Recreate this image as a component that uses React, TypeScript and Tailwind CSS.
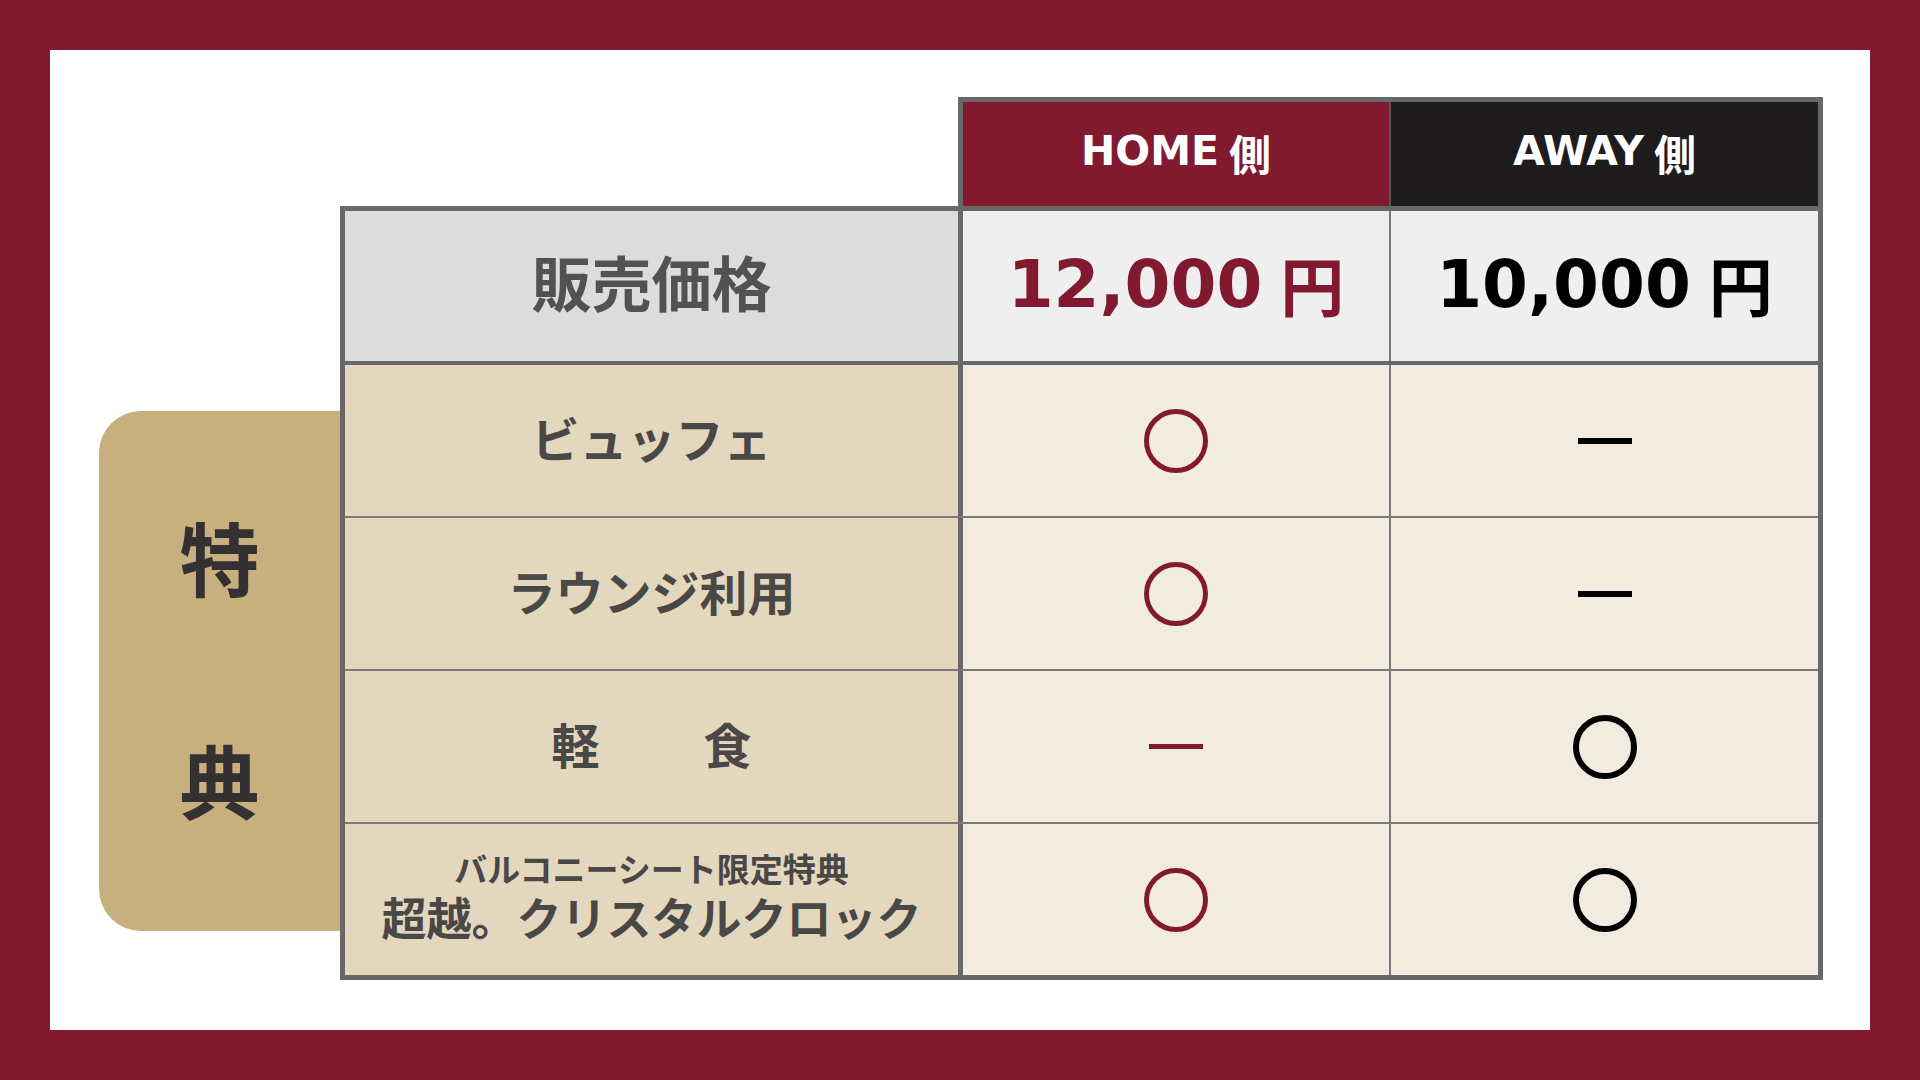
const jp = '[font-family:"Noto_Sans_CJK_JP",sans-serif]';
const latin = '[font-family:"DejaVu_Sans","Noto_Sans_CJK_JP",sans-serif]';

type Mark = 'circle' | 'dash';

function Circle({ tone }: { tone: 'red' | 'black' }) {
  return tone === 'red' ? (
    <div className="w-[64px] h-[64px] rounded-full border-[5px] border-[#821a2f]"></div>
  ) : (
    <div className="w-[64px] h-[64px] rounded-full border-[6px] border-black"></div>
  );
}

function Dash({ tone }: { tone: 'red' | 'black' }) {
  return tone === 'red' ? (
    <div className="w-[54px] h-[5px] bg-[#821a2f]"></div>
  ) : (
    <div className="w-[54px] h-[6px] bg-black"></div>
  );
}

function MarkCell({ mark, tone }: { mark: Mark; tone: 'red' | 'black' }) {
  return mark === 'circle' ? <Circle tone={tone} /> : <Dash tone={tone} />;
}

export default function App() {
  const benefits: { id: number; home: Mark; away: Mark }[] = [
    { id: 1, home: 'circle', away: 'dash' },
    { id: 2, home: 'circle', away: 'dash' },
    { id: 3, home: 'dash', away: 'circle' },
    { id: 4, home: 'circle', away: 'circle' },
  ];

  const label = (id: number) => {
    if (id === 1) return <span className="text-[48px] leading-none">ビュッフェ</span>;
    if (id === 2) return <span className="text-[48px] leading-none">ラウンジ利用</span>;
    if (id === 3)
      return (
        <span className="flex gap-[104px] text-[48px] leading-none">
          <span>軽</span>
          <span>食</span>
        </span>
      );
    return (
      <span className="flex flex-col items-center gap-[9px]">
        <span className="text-[33px] leading-none">バルコニーシート限定特典</span>
        <span className="text-[45px] leading-none">超越。クリスタルクロック</span>
      </span>
    );
  };

  return (
    <main className="w-screen h-screen bg-[#821a2f] p-[50px]">
      <div className={`w-full h-full bg-white pt-[47px] pl-[49px] flex items-end pb-[50px] ${jp}`}>
        {/* 特典 tab */}
        <div className="w-[241px] h-[520px] mb-[49px] pb-[10px] bg-[#c8b07e] rounded-l-[42px] flex flex-col items-center justify-center gap-[143px] text-[80px] leading-[80px] font-bold text-[#333131]">
          <span>特</span>
          <span>典</span>
        </div>

        <div className="flex flex-col">
          {/* header */}
          <div className="ml-[618px] w-[865px] border-[5px] border-b-0 border-[#686868] flex h-[109px]">
            <div className={`w-[426px] bg-[#821a2f] flex items-center justify-center pb-[4px] text-white font-bold ${latin}`}>
              <span className="text-[41px]">HOME</span>
              <span className={`text-[42px] ml-[10px] ${jp}`}>側</span>
            </div>
            <div className="w-[2px] bg-[#555]"></div>
            <div className={`w-[427px] bg-[#1e1c1d] flex items-center justify-center pb-[4px] text-white font-bold ${latin}`}>
              <span className="text-[41px]">AWAY</span>
              <span className={`text-[42px] ml-[10px] ${jp}`}>側</span>
            </div>
          </div>

          {/* body */}
          <div className="w-[1483px] border-[5px] border-[#686868] flex flex-col">
            <div className="flex h-[154px] border-b-[4px] border-[#686868]">
              <div className="w-[618px] bg-[#dcdcdc] border-r-[5px] border-[#686868] flex items-center justify-center pb-[10px] text-[60px] leading-none font-bold text-[#545151]">
                販売価格
              </div>
              <div className={`w-[426px] bg-[#efefef] flex items-center justify-center pb-[2px] font-bold text-[#821a2f] ${latin}`}>
                <span className="text-[66px] leading-none">12,000</span>
                <span className={`text-[64px] leading-none ml-[18px] mb-[4px] ${jp}`}>円</span>
              </div>
              <div className="w-[2px] bg-[#777]"></div>
              <div className={`w-[427px] bg-[#efefef] flex items-center justify-center pb-[2px] font-bold text-black ${latin}`}>
                <span className="text-[66px] leading-none">10,000</span>
                <span className={`text-[64px] leading-none ml-[18px] mb-[4px] ${jp}`}>円</span>
              </div>
            </div>

            {benefits.map((b, i) => (
              <div
                key={b.id}
                className={
                  i < benefits.length - 1
                    ? 'flex h-[153px] border-b-[2px] border-[#7a7a7a]'
                    : 'flex h-[151px]'
                }
              >
                <div className="w-[618px] bg-[#e3d7bd] border-r-[5px] border-[#686868] flex items-center justify-center pb-[8px] font-bold text-[#4a4747]">
                  {label(b.id)}
                </div>
                <div className="w-[426px] bg-[#f2ece0] flex items-center justify-center">
                  <MarkCell mark={b.home} tone="red" />
                </div>
                <div className="w-[2px] bg-[#7a7a7a]"></div>
                <div className="w-[427px] bg-[#f2ece0] flex items-center justify-center">
                  <MarkCell mark={b.away} tone="black" />
                </div>
              </div>
            ))}
          </div>
        </div>
      </div>
    </main>
  );
}
